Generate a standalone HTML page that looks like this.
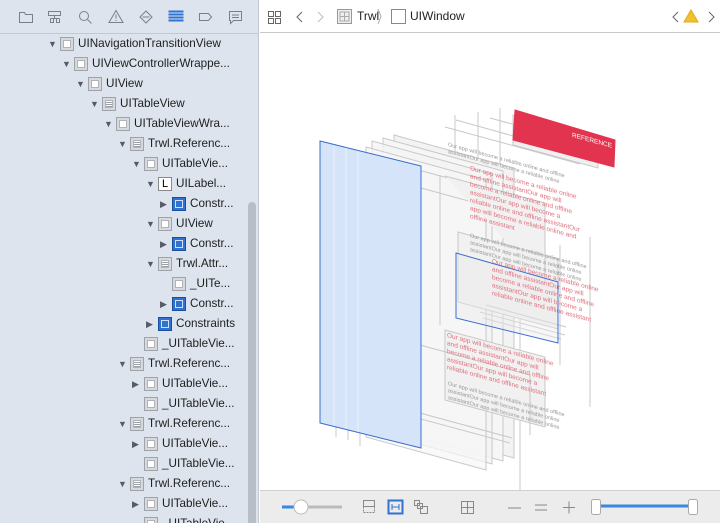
<!DOCTYPE html>
<html><head><meta charset="utf-8"><style>
*{margin:0;padding:0;box-sizing:border-box}
body{width:720px;height:523px;overflow:hidden;background:#fff;font-family:"Liberation Sans",sans-serif;position:relative}
#side{position:absolute;left:0;top:0;width:259px;height:523px;background:#dde4ee;border-right:1px solid #c4c8ce;overflow:hidden}
#stop{position:absolute;left:0;top:0;width:259px;height:34px;border-bottom:1px solid #c4c8d0}
.row{position:absolute;height:20px;font-size:11.7px;color:#1e1e1e;white-space:nowrap;line-height:20px}
.tri{position:absolute;top:0;font-size:9px;color:#555c66}
.ic{position:absolute;top:3px;width:14px;height:14px;background:#d7d9dc;border:1px solid #9ea3aa}
.ic i{position:absolute;left:2px;top:2px;width:8px;height:8px;background:#fff;border:1px solid #b0b4ba}
.ic.l{background:#fff;border-color:#888;font-size:11px;line-height:12px;text-align:center;color:#000}
.ic.c{background:#2f72d0;border-color:#1a4f9c}
.ic.c i{background:none;border:1px solid #cfe0ff;left:2px;top:2px;width:8px;height:8px}
.ic.t i{background:repeating-linear-gradient(#fff 0 1px,#9aa0a8 1px 2px)}
.tx{position:absolute;top:0}
#top{position:absolute;left:260px;top:0;width:460px;height:33px;border-bottom:1px solid #c9c9c9;background:#fff}
#bot{position:absolute;left:260px;top:490px;width:460px;height:33px;background:#ececec;border-top:1px solid #d0d0d0}
#scroll{position:absolute;left:248px;top:202px;width:8px;height:330px;background:#b9bec6;border-radius:4px}
</style></head><body>
<div id="side">
<div id="stop">
<svg width="259" height="34" fill="none" stroke="#7a8089" stroke-width="1">
<path d="M19.5 12.5h5l1 2h7v8h-13z"/>
<path d="M48.5 11.5h12v4h-12zM54.5 15.5v3M50.5 18.5h9M50.5 18.5v4h3v-4M56.5 18.5v4h3v-4"/>
<circle cx="84" cy="16" r="4.5"/><path d="M87.5 19.5l4 4"/>
<path d="M116 10.5l7 12h-14z M116 14.5v4M116 20v1"/>
<path d="M146 11l6 6-6 6-6-6zM142.5 17h7"/>
<path d="M168.5 11.5h15M168.5 14.5h15M168.5 17.5h15M168.5 20.5h15" stroke="#2f72d0" stroke-width="2"/>
<path d="M199.5 13.5h9l3 3.5-3 3.5h-9z"/>
<path d="M229.5 11.5h12v9h-8l-3 3v-3h-1zM232 15h7M232 17.5h7"/>
</svg></div>
<div id="scroll"></div>
<div id="tree"></div>
</div>
<div id="top">
<svg width="460" height="33" fill="none" stroke="#666" stroke-width="1">
<path d="M8.5 11.5h5v5h-5zM15.5 11.5h5v5h-5zM8.5 18.5h5v5h-5zM15.5 18.5h5v5h-5z"/>
<path d="M42 12l-5 5 5 5"/><path d="M58 12l5 5-5 5" stroke="#bbb"/>
<rect x="77.5" y="9.5" width="14" height="14" stroke="#999" fill="#eee"/>
<path d="M80 12h9v9h-9zM84.5 12v9M80 16.5h9" stroke="#aaa"/>
<path d="M118 9l3 7.5-3 7.5" stroke="#aaa"/>
<rect x="131.5" y="9.5" width="14" height="14" stroke="#888"/>
<path d="M418 12l-5 5 5 5"/><path d="M449 12l5 5-5 5"/>
<path d="M431 10l7 12h-14z" fill="#f2c12e" stroke="#e0aa10"/>
</svg>
<div style="position:absolute;left:97px;top:9px;font-size:12px;color:#222">Trwl</div>
<div style="position:absolute;left:150px;top:9px;font-size:12px;color:#222">UIWindow</div>
</div>
<svg style="position:absolute;left:260px;top:34px" width="460" height="456" fill="none">
<g transform="translate(-260,-34)" stroke="#c8c8c8" stroke-width="1">
<path d="M513 115l85 23v30l-85-23z" fill="#f0f0f0"/>
<path d="M490 118l110 30" />
<path d="M456 120l136 38M445 127l135 37M455 115v150" />
<path d="M478 112v150M500 108v150"/>
<path d="M394 135l120 33v290l-120-33z" fill="#f3f3f3"/>
<path d="M383 138l120 33v290l-120-33z" fill="#f6f6f6"/>
<path d="M372 141l120 33v290l-120-33z" fill="#f4f4f4" fill-opacity=".8"/>
<path d="M366 147l120 33v290l-120-33z" fill="#f7f7f7" fill-opacity=".7"/>
<path d="M410 185l110 30v290"/>
<path d="M400 165l140 38M440 175v150"/>
<path d="M445 176l100 27v80M458 232l100 27v70l-100-27z" fill="#f1f1f1"/>
<path d="M445 330l100 27v70l-100-27z" fill="#f1f1f1"/>
<path d="M420 345l110 30v60" /><path d="M590 237v170M560 245v120"/>
<path d="M486 305l80 22M480 312l85 23M483 318l78 21" />
<path d="M372 400l140 38M380 408l130 35"/>
<path d="M360 156v290M348 150v290M336 147v290"/>
<path d="M320 141l101 25v282l-101-25z" fill="#d6e4f9"/>
<path d="M334 144v282M346 147v282M358 150v282" stroke="#e8f0fc"/>
<path d="M320 141l101 25v282l-101-25z" stroke="#3a6fd0"/>
<path d="M456 253l102 29v61l-102-25z" stroke="#3a6fd0" fill="#ececec" fill-opacity=".4"/>
<path d="M515 110l100 30-1 27-101-27z" fill="#e3344f" stroke="#e3344f"/>
</g>
<g transform="translate(-260,-34)" font-family="Liberation Sans" font-size="6.5">
<text transform="matrix(1,0.27,0,1,572,137)" fill="#fff">REFERENCE</text>
<g fill="#e0707c">
<text transform="matrix(1,0.27,0,1,470,170)">Our app will become a reliable online</text>
<text transform="matrix(1,0.27,0,1,470,178)">and offline assistantOur app will</text>
<text transform="matrix(1,0.27,0,1,470,186)">become a reliable online and offline</text>
<text transform="matrix(1,0.27,0,1,470,194)">assistantOur app will become a</text>
<text transform="matrix(1,0.27,0,1,470,202)">reliable online and offline assistantOur</text>
<text transform="matrix(1,0.27,0,1,470,210)">app will become a reliable online and</text>
<text transform="matrix(1,0.27,0,1,470,218)">offline assistant</text>
<text transform="matrix(1,0.27,0,1,492,263)">Our app will become a reliable online</text>
<text transform="matrix(1,0.27,0,1,492,271)">and offline assistantOur app will</text>
<text transform="matrix(1,0.27,0,1,492,279)">become a reliable online and offline</text>
<text transform="matrix(1,0.27,0,1,492,287)">assistantOur app will become a</text>
<text transform="matrix(1,0.27,0,1,492,295)">reliable online and offline assistant</text>
<text transform="matrix(1,0.27,0,1,447,337)">Our app will become a reliable online</text>
<text transform="matrix(1,0.27,0,1,447,345)">and offline assistantOur app will</text>
<text transform="matrix(1,0.27,0,1,447,353)">become a reliable online and offline</text>
<text transform="matrix(1,0.27,0,1,447,361)">assistantOur app will become a</text>
<text transform="matrix(1,0.27,0,1,447,369)">reliable online and offline assistant</text>
</g>
<g fill="#999" font-size="5.5">
<text transform="matrix(1,0.27,0,1,448,146)">Our app will become a reliable online and offline</text>
<text transform="matrix(1,0.27,0,1,448,153)">assistantOur app will become a reliable online</text>
<text transform="matrix(1,0.27,0,1,470,237)">Our app will become a reliable online and offline</text>
<text transform="matrix(1,0.27,0,1,470,244)">assistantOur app will become a reliable online</text>
<text transform="matrix(1,0.27,0,1,470,251)">assistantOur app will become a reliable online</text>
<text transform="matrix(1,0.27,0,1,448,385)">Our app will become a reliable online and offline</text>
<text transform="matrix(1,0.27,0,1,448,392)">assistantOur app will become a reliable online</text>
<text transform="matrix(1,0.27,0,1,448,399)">assistantOur app will become a reliable online</text>
</g></g>
</svg>
<div id="bot">
<svg width="460" height="33" fill="none" stroke="#888" stroke-width="1">
<path d="M22 16h60" stroke="#bbb" stroke-width="3"/><path d="M22 16h18" stroke="#3a86e0" stroke-width="3"/>
<circle cx="41" cy="16" r="7" fill="#fff" stroke="#bbb"/>
<path d="M103.5 9.5h11v6h-11z"/><path d="M103.5 15.5v6h11v-6" stroke-dasharray="2 1"/>
<rect x="128.5" y="9.5" width="14" height="13" stroke="#2f72d0" stroke-width="2"/><path d="M132 16h7M132 13v6M139 13v6" stroke="#2f72d0"/>
<path d="M154.5 9.5h5v5h-5zM157.5 12.5h5v5h-5zM160.5 15.5h7v7h-7z"/>
<path d="M201.5 10.5h12v12h-12zM207.5 10.5v12M201.5 16.5h12"/>
<path d="M248 17h13M275 14h12M275 19h12M303 16.5h12M309 10.5v12"/>
<path d="M338 15h92" stroke="#3a86e0" stroke-width="3"/>
<rect x="331.5" y="8.5" width="9" height="15" rx="2" fill="#fff" stroke="#aaa"/>
<rect x="428.5" y="8.5" width="9" height="15" rx="2" fill="#fff" stroke="#aaa"/>
</svg></div>
<script>
var rows=[[0,1,'b','UINavigationTransitionView'],[1,1,'b','UIViewControllerWrappe...'],[2,1,'b','UIView'],[3,1,'t','UITableView'],[4,1,'b','UITableViewWra...'],[5,1,'t','Trwl.Referenc...'],[6,1,'b','UITableVie...'],[7,1,'l','UILabel...'],[8,2,'c','Constr...'],[7,1,'b','UIView'],[8,2,'c','Constr...'],[7,1,'t','Trwl.Attr...'],[8,0,'b','_UITe...'],[8,2,'c','Constr...'],[7,2,'c','Constraints'],[6,0,'b','_UITableVie...'],[5,1,'t','Trwl.Referenc...'],[6,2,'b','UITableVie...'],[6,0,'b','_UITableVie...'],[5,1,'t','Trwl.Referenc...'],[6,2,'b','UITableVie...'],[6,0,'b','_UITableVie...'],[5,1,'t','Trwl.Referenc...'],[6,2,'b','UITableVie...'],[6,0,'b','_UITableVie...']];
var h='';rows.forEach(function(r,i){var L=48+14*r[0];var y=34+i*20;
h+='<div class="row" style="top:'+y+'px;left:0;width:259px">';
if(r[1])h+='<span class="tri" style="left:'+L+'px">'+(r[1]==1?'\u25BC':'\u25B6')+'</span>';
var ic=r[2]=='l'?'<div class="ic l" style="left:'+(L+12)+'px">L</div>':'<div class="ic '+r[2]+'" style="left:'+(L+12)+'px"><i></i></div>';
h+=ic+'<span class="tx" style="left:'+(L+30)+'px">'+r[3]+'</span></div>';});
document.getElementById('tree').innerHTML=h;
</script>
</body></html>
